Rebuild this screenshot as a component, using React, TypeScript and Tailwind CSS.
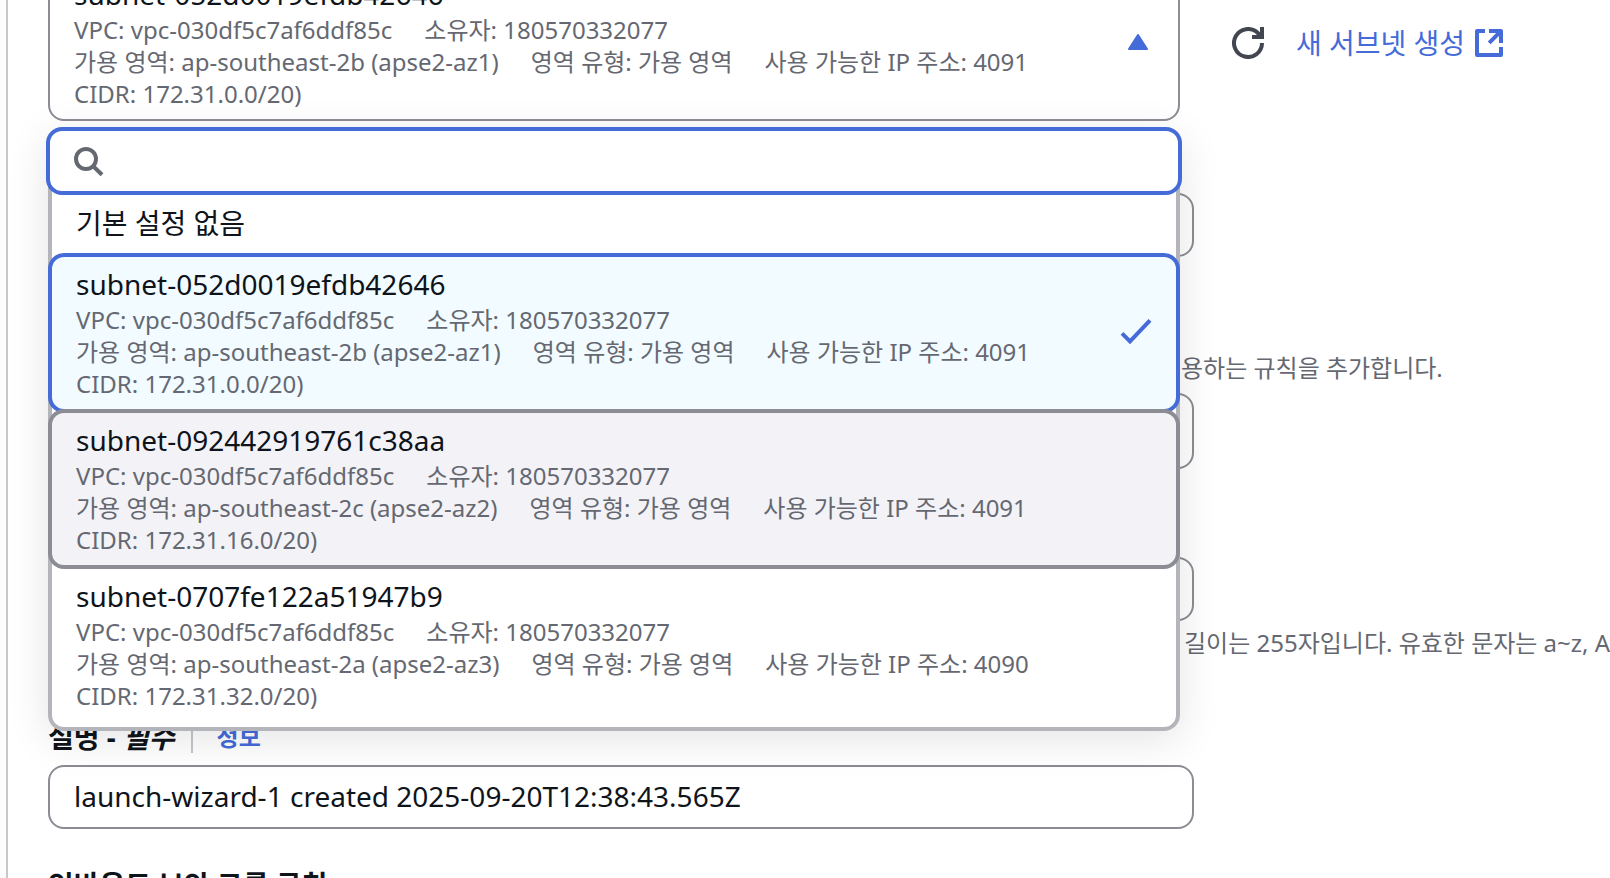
import { useState } from "react";

interface ISubnet {
  id: string;
  vpc: string;
  owner: string;
  zone: string;
  zoneType: string;
  availableIps: number;
  cidr: string;
}

const subnets: ISubnet[] = [
  {
    id: "subnet-052d0019efdb42646",
    vpc: "vpc-030df5c7af6ddf85c",
    owner: "180570332077",
    zone: "ap-southeast-2b (apse2-az1)",
    zoneType: "가용 영역",
    availableIps: 4091,
    cidr: "172.31.0.0/20)",
  },
  {
    id: "subnet-092442919761c38aa",
    vpc: "vpc-030df5c7af6ddf85c",
    owner: "180570332077",
    zone: "ap-southeast-2c (apse2-az2)",
    zoneType: "가용 영역",
    availableIps: 4091,
    cidr: "172.31.16.0/20)",
  },
  {
    id: "subnet-0707fe122a51947b9",
    vpc: "vpc-030df5c7af6ddf85c",
    owner: "180570332077",
    zone: "ap-southeast-2a (apse2-az3)",
    zoneType: "가용 영역",
    availableIps: 4090,
    cidr: "172.31.32.0/20)",
  },
];

function SubnetDetails({ subnet }: { subnet: ISubnet }) {
  return (
    <span className="block whitespace-nowrap">
      <span className="block text-[28px] leading-10 text-[#0f141a]">{subnet.id}</span>
      <span className="block text-2xl leading-8 text-[#656871]">
        <span className="flex gap-8">
          <span>VPC: {subnet.vpc}</span>
          <span>소유자: {subnet.owner}</span>
        </span>
        <span className="flex gap-8">
          <span>가용 영역: {subnet.zone}</span>
          <span>영역 유형: {subnet.zoneType}</span>
          <span>사용 가능한 IP 주소: {subnet.availableIps}</span>
        </span>
        <span className="block">CIDR: {subnet.cidr}</span>
      </span>
    </span>
  );
}

function RefreshIcon() {
  return (
    <svg viewBox="0 0 16 16" className="size-8" fill="none" stroke="currentColor" strokeWidth="2">
      <path d="M15 0v5h-5" />
      <path d="M15 8a7 7 0 1 1-2.200-5.100L14.500 4.600" />
    </svg>
  );
}

function ExternalIcon() {
  return (
    <svg viewBox="0 0 16 16" className="size-8" fill="none" stroke="currentColor" strokeWidth="2" strokeLinejoin="round">
      <path d="M14 10v4H2V2h4" />
      <path d="M8 2h6v6M14 2 8.100 7.900" />
    </svg>
  );
}

function SearchIcon() {
  return (
    <svg viewBox="0 0 16 16" className="size-8" fill="none" stroke="currentColor" strokeWidth="2">
      <circle cx="6" cy="7" r="5" />
      <path d="m9.500 10.500 4.500 4.400" />
    </svg>
  );
}

function CheckIcon() {
  return (
    <svg viewBox="0 0 16 16" className="size-8" fill="none" stroke="currentColor" strokeWidth="2">
      <path d="m1 8.700 4 4L15 2.200" />
    </svg>
  );
}

export default function App() {
  const [query, setQuery] = useState("");
  const [description, setDescription] = useState("launch-wizard-1 created 2025-09-20T12:38:43.565Z");
  const [selected, setSelected] = useState(subnets[0]);

  return (
    <div className="flex h-screen overflow-hidden bg-[#fcfcfd] pl-1.5 font-['Noto_Sans','Noto_Sans_CJK_KR',sans-serif]">
      <main className="min-w-0 flex-1 border-l-2 border-[#c6c6cd] bg-white pl-10">
        {/* Subnet */}
        <div className="-mt-[35px] flex items-center gap-[52px]">
          <div className="relative w-3/4 max-w-[1132px] shrink-0">
            <button
              type="button"
              aria-haspopup="listbox"
              aria-expanded="true"
              className="flex w-full items-center justify-between rounded-2xl border-2 border-[#8c8c94] bg-white pt-[7px] pr-[30px] pb-[9px] pl-6 text-left"
            >
              <SubnetDetails subnet={selected} />
              <svg viewBox="0 0 20 16" className="h-4 w-5 shrink-0 text-[#456bd9]" fill="currentColor" stroke="currentColor" strokeWidth="2" strokeLinejoin="round">
                <path d="M10 1 1 15h18z" />
              </svg>
            </button>

            <div className="absolute inset-x-0 top-full z-10 mt-2 rounded-2xl bg-white shadow-[0_8px_40px_2px_rgba(0,7,22,0.1)]">
              <label className="relative z-10 -mx-0.5 -mt-0.5 flex h-[68px] items-center gap-6 rounded-2xl border-4 border-[#456bd9] bg-white px-6 text-[#656871]">
                <SearchIcon />
                <input
                  type="text"
                  aria-label="서브넷 검색"
                  value={query}
                  onChange={(e) => setQuery(e.target.value)}
                  className="min-w-0 flex-1 text-[28px] leading-10 text-[#0f141a] outline-none"
                />
              </label>
              <ul role="listbox" className="-mt-4 rounded-b-2xl border-x-4 border-b-4 border-[#b4b4bb] pt-4 pb-0.5">
                <li role="option" aria-selected="false" className="px-6 pt-2 pb-2.5 text-[28px] leading-10 text-[#0f141a]">
                  기본 설정 없음
                </li>
                {subnets.map((subnet, index) => (
                  <li
                    key={subnet.id}
                    role="option"
                    aria-selected={subnet === selected}
                    onClick={() => setSelected(subnet)}
                    className={`relative -mx-1 flex items-center justify-between rounded-2xl border-4 px-6 pt-[7px] pb-[9px] ${index > 0 ? "-mt-1" : ""} ${
                      subnet === selected
                        ? "border-[#456bd9] bg-[#f2fbff]"
                        : index === 1
                          ? "border-[#8c8c94] bg-[#f3f3f7]"
                          : "border-transparent"
                    }`}
                  >
                    <SubnetDetails subnet={subnet} />
                    {subnet === selected && (
                      <span className="text-[#456bd9]">
                        <CheckIcon />
                      </span>
                    )}
                  </li>
                ))}
              </ul>
            </div>
          </div>

          <div className="flex items-center gap-8 whitespace-nowrap">
            <button type="button" aria-label="새로 고침" className="text-[#424650]">
              <RefreshIcon />
            </button>
            <a href="#create" className="flex items-center gap-2 text-[28px] leading-10 text-[#456bd9]">
              새 서브넷 생성
              <ExternalIcon />
            </a>
          </div>
        </div>

        {/* Fields behind the open list */}
        <div className="mt-[72px] w-3/4 max-w-[1146px]">
          <input type="text" aria-label="퍼블릭 IP 자동 할당" className="block h-16 w-full rounded-2xl border-2 border-[#8c8c94] px-6" />
        </div>
        <p className="mt-[95px] pl-[1133px] text-2xl leading-8 whitespace-nowrap text-[#656871]">용하는 규칙을 추가합니다.</p>
        <div className="mt-[9px] w-3/4 max-w-[1146px]">
          <input type="text" aria-label="방화벽" className="block h-[76px] w-full rounded-2xl border-2 border-[#8c8c94] px-6" />
          <input type="text" aria-label="보안 그룹 이름" className="mt-[88px] block h-16 w-full rounded-2xl border-2 border-[#8c8c94] px-6" />
        </div>
        <p className="mt-1.5 pl-[1136px] text-2xl leading-8 whitespace-nowrap text-[#656871]">
          길이는 255자입니다. 유효한 문자는 a~z, A~Z, 0~9
        </p>

        <div className="mt-[58px] flex items-center font-bold">
          <label htmlFor="description" className="text-[28px] leading-10 text-[#0f141a]">
            설명 - <i>필수</i>
          </label>
          <span className="ml-4 h-8 w-0.5 bg-[#c6c6cd]" />
          <a href="#info" className="ml-6 text-2xl leading-8 text-[#456bd9]">
            정보
          </a>
        </div>
        <input
          id="description"
          type="text"
          value={description}
          onChange={(e) => setDescription(e.target.value)}
          className="mt-2 block h-16 w-3/4 max-w-[1146px] rounded-2xl border-2 border-[#8c8c94] px-6 pb-0.5 text-[28px] leading-10 text-[#0f141a]"
        />
        <h3 className="mt-9 text-[28px] leading-10 font-bold text-[#0f141a]">인바운드 보안 그룹 규칙</h3>
      </main>
    </div>
  );
}
